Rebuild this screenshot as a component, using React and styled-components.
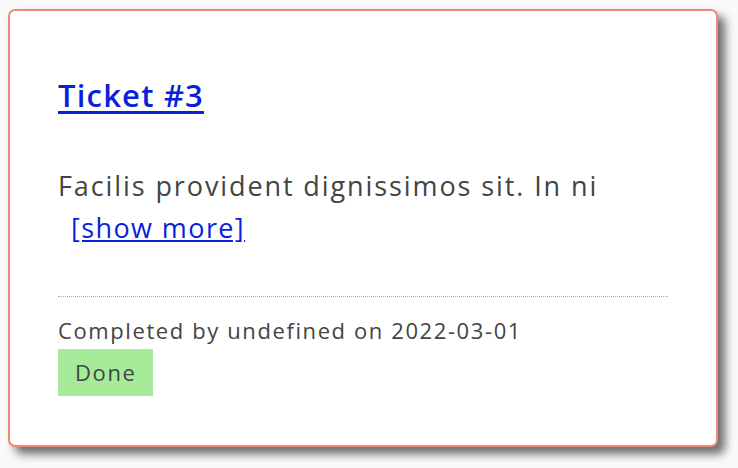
import React from "react";
import styled, { createGlobalStyle } from "styled-components";

const Global = createGlobalStyle`
  html, body { margin: 0; padding: 0; background: #fafafa; }
  body { font-family: "Open Sans", "Noto Sans", sans-serif; }
`;

const Page = styled.div`
  padding: 9px 20px 20px 8px;
`;

const Card = styled.article`
  box-sizing: border-box;
  width: 710px;
  height: 438px;
  background: #fff;
  border: 2px solid #f08878;
  border-radius: 7px;
  box-shadow: 7px 7px 10px rgba(60, 60, 60, 0.75);
  padding: 48px;
  display: flex;
  flex-direction: column;
  color: #444;
`;

const Title = styled.a`
  font-size: 31px;
  font-weight: 600;
  letter-spacing: 1.2px;
  color: #0a1fdc;
  text-decoration: underline;
  text-underline-offset: 4px;
  text-decoration-thickness: 3px;
  align-self: flex-start;
  margin-top: 18px;
  line-height: 36px;
`;

const Body = styled.p`
  margin: 52px 0 0;
  font-size: 27px;
  letter-spacing: 1.9px;
  line-height: 42px;
  color: #444;
`;

const ShowMore = styled.a`
  display: inline-block;
  margin-left: 13px;
  letter-spacing: 1.4px;
  color: #0a1fdc;
  text-decoration: underline;
`;

const Divider = styled.hr`
  margin: 47px 0 0;
  border: none;
  border-top: 1px dotted #aaa;
  height: 0;
`;

const Meta = styled.div`
  margin-top: 20px;
  font-size: 22px;
  letter-spacing: 1.6px;
  line-height: 26px;
  color: #444;
`;

const Status = styled.span`
  align-self: flex-start;
  margin-top: 6px;
  background: #a6eb99;
  color: #444;
  font-size: 22px;
  letter-spacing: 1.6px;
  line-height: 47px;
  padding: 0 17px;
`;

export default function App() {
  return (
    <>
      <Global />
      <Page>
        <Card>
          <Title href="#">Ticket #3</Title>
          <Body>
            Facilis provident dignissimos sit. In ni
            <ShowMore href="#">[show more]</ShowMore>
          </Body>
          <Divider />
          <Meta>Completed by undefined on 2022-03-01</Meta>
          <Status>Done</Status>
        </Card>
      </Page>
    </>
  );
}
